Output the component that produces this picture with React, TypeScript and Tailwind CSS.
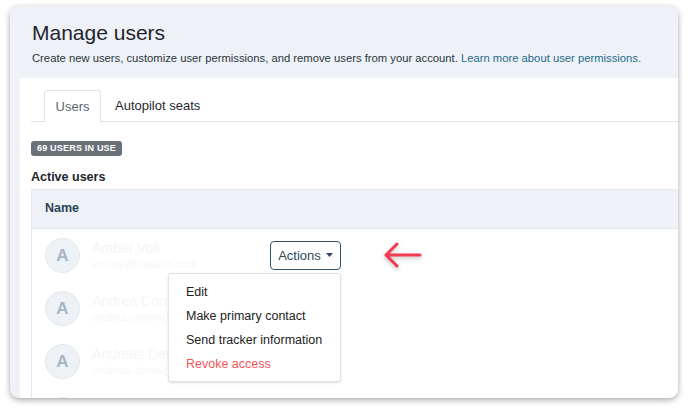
const users = [
  { name: "Amber Voll", email: "amber@leadinfo.com" },
  { name: "Andrea Contini", email: "andrea.contini@leadinfo.com" },
  { name: "Andreas Derks", email: "andreas.derks@leadinfo.com" },
];

function Avatar() {
  return (
    <div className="w-[35px] h-[35px] rounded-full bg-[#eef2f7] border border-[#e3e8ef] flex items-center justify-center shrink-0">
      <span className="text-[17px] font-bold text-[#a7b6c6]">A</span>
    </div>
  );
}

function ActionsMenu() {
  return (
    <div className="relative">
      <button
        type="button"
        className="w-[71px] h-[29px] rounded-[4px] border border-[#2f5068] bg-white flex items-center justify-center gap-[5px] text-[13px] text-[#2d4a5e]"
      >
        Actions
        <svg width="7" height="4" viewBox="0 0 7 4">
          <path d="M0 0h7L3.5 4z" fill="#2d4a5e" />
        </svg>
      </button>
      <div className="absolute right-0 top-[32px] w-[173px] h-[109px] bg-white border border-[#dfe3e8] rounded-[3px] shadow-sm pt-[10px] pl-[17px] flex flex-col gap-[8px] text-[12.5px] leading-[16px] z-10">
        <span className="text-[#222]">Edit</span>
        <span className="text-[#222]">Make primary contact</span>
        <span className="text-[#222]">Send tracker information</span>
        <span className="text-[#f2545b]">Revoke access</span>
      </div>
    </div>
  );
}

export default function App() {
  return (
    <div className="w-[688px] h-[412px] bg-white pt-[6px] pl-[10px] font-['Liberation_Sans',Arial,sans-serif] overflow-hidden">
      <div className="w-[668px] h-[392px] rounded-[9px] bg-[#eef2f7] shadow-[0_2px_6px_rgba(0,0,0,0.35)] overflow-hidden flex flex-col">
        {/* Header */}
        <div className="h-[72px] shrink-0 pl-[22px] pt-[14px]">
          <h1 className="text-[21px] leading-[26px] text-[#1f262d]">Manage users</h1>
          <p className="mt-[5px] text-[11.25px] leading-[14px] text-[#2b3640]">
            Create new users, customize user permissions, and remove users from your account.{" "}
            <span className="text-[#1e6b8c]">Learn more about user permissions.</span>
          </p>
        </div>

        {/* Content */}
        <div className="flex-1 ml-[10px] bg-white pl-[11px] pt-[12px]">
          <div className="flex items-end border-b border-[#dfe3e8] pl-[13px] h-[32px]">
            <div className="h-[32px] w-[57px] border border-b-0 border-[#dfe3e8] rounded-t-[3px] bg-white -mb-px flex items-center justify-center text-[13px] text-[#5b6670]">
              Users
            </div>
            <div className="h-[31px] pl-[14px] flex items-center text-[13px] text-[#1f262d]">
              Autopilot seats
            </div>
          </div>

          <div className="mt-[19px] h-[15px] w-[91px] rounded-[3px] bg-[#6b7178] flex items-center justify-center text-[9px] font-bold text-white tracking-[0.2px]">
            69 USERS IN USE
          </div>

          <div className="mt-[12px] text-[12.5px] font-bold text-[#1f262d]">Active users</div>

          <div className="mt-[2px] border-l border-[#e3e8ef]">
            <div className="h-[40px] bg-[#eef2f7] border-y border-[#e3e8ef] pl-[13px] flex items-center text-[12.5px] font-bold text-[#2b4357]">
              Name
            </div>
            {users.map((u, i) => (
              <div key={u.email} className="h-[53px] pl-[13px] flex items-center">
                <Avatar />
                <div className="ml-[12px] w-[178px] flex flex-col">
                  <span className="text-[14px] leading-[18px] text-[#f4f5f7]">{u.name}</span>
                  <span className="text-[11px] leading-[14px] text-[#f6f7f9]">{u.email}</span>
                </div>
                {i === 0 && (
                  <>
                    <ActionsMenu />
                    <svg className="ml-[42px] drop-shadow-[0_2px_2px_rgba(0,0,0,0.25)]" width="40" height="28" viewBox="0 0 40 28">
                      <path
                        d="M37 14H4M14 3L3 14l11 11"
                        stroke="#f23a50"
                        strokeWidth="3"
                        strokeLinecap="round"
                        strokeLinejoin="round"
                        fill="none"
                      />
                    </svg>
                  </>
                )}
              </div>
            ))}
            <div className="h-[53px] pl-[13px] flex items-center">
              <Avatar />
            </div>
          </div>
        </div>
      </div>
    </div>
  );
}
